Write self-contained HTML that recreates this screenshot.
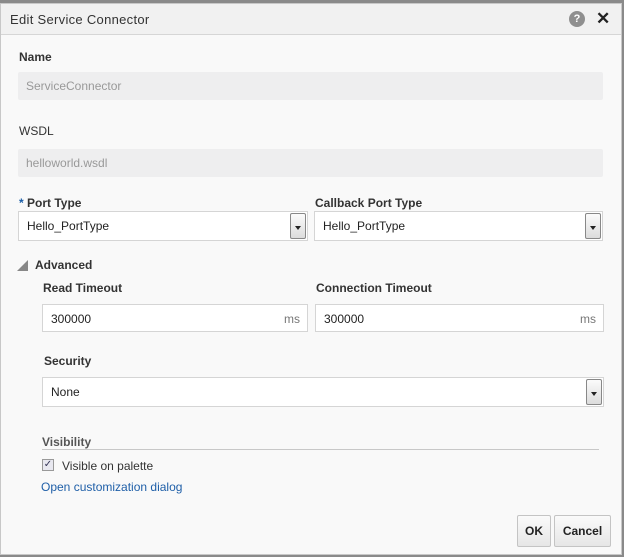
<!DOCTYPE html>
<html><head><style>
*{box-sizing:border-box;margin:0;padding:0}
body{width:624px;height:557px;background:#8a8a8a;font-family:"Liberation Sans",Arial,sans-serif;font-size:12px;color:#333;position:relative;overflow:hidden}
.dlg{position:absolute;left:0;top:3px;width:622px;height:552px;background:#f9f9f9;border:1px solid #c8c8c8}
.hd{position:absolute;left:0;top:0;width:100%;height:31px;background:#f1f1f1;border-bottom:1px solid #d6d6d6}
.a{position:absolute}
.lbl{font-weight:bold;color:#333;font-size:12px}
.ro{background:#eeeeef;border-radius:2px;color:#999;padding-left:8px;line-height:28px}
.in{background:#fff;border:1px solid #d5d5d5;line-height:28px;padding-left:8px;color:#222}
.arr{position:absolute;right:1px;top:1px;bottom:1px;width:16px;background:linear-gradient(#fbfbfb,#dcdcdc);border:1px solid #888;border-radius:2px}
.arr:after{content:"";position:absolute;left:4px;top:12px;border:3.5px solid transparent;border-top:4px solid #222}
.btn{position:absolute;background:linear-gradient(#fafafa,#e6e6e6);border:1px solid #c4c4c4;border-radius:2px;font-weight:bold;text-align:center;line-height:30px;color:#222}
</style></head><body>
<div class="dlg">
<div class="hd"><div class="a" style="left:9px;top:8px;font-size:13px;color:#333;letter-spacing:0.3px">Edit Service Connector</div>
<div class="a" style="left:568px;top:7px;width:16px;height:16px;border-radius:50%;background:#8f8f8f;color:#fff;font-weight:bold;font-size:11px;text-align:center;line-height:16px">?</div>
<div class="a" style="left:595px;top:5px;font-size:17px;font-weight:bold;color:#222">✕</div></div>
<div class="a lbl" style="left:18px;top:46px">Name</div>
<div class="a ro" style="left:17px;width:585px;height:28px;top:68px">ServiceConnector</div>
<div class="a lbl" style="left:18px;top:120px;font-weight:normal">WSDL</div>
<div class="a ro" style="left:17px;top:145px;width:585px;height:28px">helloworld.wsdl</div>
<div class="a lbl" style="left:18px;top:192px"><span style="color:#1a5ea8">*</span> Port Type</div>
<div class="a lbl" style="left:314px;top:192px">Callback Port Type</div>
<div class="a in" style="left:17px;top:207px;width:290px;height:30px">Hello_PortType<div class="arr"></div></div>
<div class="a in" style="left:313px;top:207px;width:289px;height:30px">Hello_PortType<div class="arr"></div></div>
<div class="a" style="left:16px;top:256px;width:0;height:0;border-left:11px solid transparent;border-bottom:11px solid #888"></div>
<div class="a lbl" style="left:34px;top:254px">Advanced</div>
<div class="a lbl" style="left:42px;top:277px">Read Timeout</div>
<div class="a lbl" style="left:315px;top:277px">Connection Timeout</div>
<div class="a in" style="left:41px;top:300px;width:266px;height:28px">300000<span style="position:absolute;right:7px;color:#777">ms</span></div>
<div class="a in" style="left:314px;top:300px;width:289px;height:28px">300000<span style="position:absolute;right:7px;color:#777">ms</span></div>
<div class="a lbl" style="left:43px;top:350px">Security</div>
<div class="a in" style="left:41px;top:373px;width:562px;height:30px">None<div class="arr"></div></div>
<div class="a lbl" style="left:41px;top:431px;color:#555">Visibility</div>
<div class="a" style="left:41px;top:445px;width:557px;height:1px;background:#c8c8c8"></div>
<div class="a" style="left:41px;top:455px;width:12px;height:12px;border:1px solid #999;background:#e8e8f0;font-size:10px;line-height:10px;text-align:center;color:#335">✓</div>
<div class="a" style="left:61px;top:455px;color:#333">Visible on palette</div>
<div class="a" style="left:40px;top:476px;color:#1f5fa8">Open customization dialog</div>
<div class="btn" style="left:516px;top:511px;width:34px;height:32px">OK</div>
<div class="btn" style="left:553px;top:511px;width:57px;height:32px">Cancel</div>
</div>
</body></html>
